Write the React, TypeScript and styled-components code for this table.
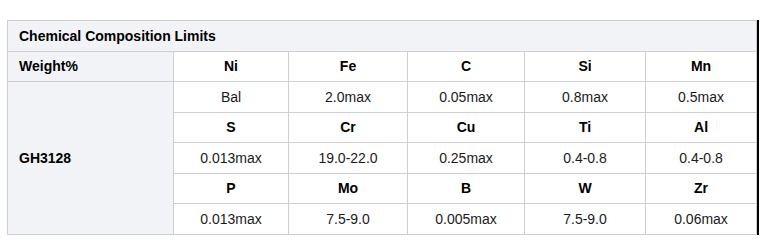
import React from "react";
import styled, { createGlobalStyle } from "styled-components";

const Global = createGlobalStyle`
  html, body { margin: 0; padding: 0; background: #fff; }
  body { font-family: "Liberation Sans", Arial, sans-serif; }
`;

const Page = styled.div`
  padding: 20px 0 0 7px;
`;

const Frame = styled.div`
  display: inline-block;
  border-right: 2px solid #000;
`;

const Table = styled.table`
  border-collapse: collapse;
  table-layout: fixed;
  width: 749px;
  font-size: 14px;
  color: #111;
`;

const Cell = styled.td<{ $head?: boolean; $side?: boolean }>`
  border: 1px solid #cfcfcf;
  padding: 0 11px;
  height: 29.5px;
  line-height: 16px;
  text-align: ${(p) => (p.$side ? "left" : "center")};
  font-weight: ${(p) => (p.$head || p.$side ? 700 : 400)};
  background: ${(p) => (p.$side ? "#f2f3f7" : "#fff")};
  color: ${(p) => (p.$head || p.$side ? "#000" : "#1a1a1a")};
  vertical-align: middle;
  white-space: nowrap;
`;

const widths = [166, 115, 119, 117, 121, 111];

const groups: { heads: string[]; vals: string[] }[] = [
  { heads: ["Ni", "Fe", "C", "Si", "Mn"], vals: ["Bal", "2.0max", "0.05max", "0.8max", "0.5max"] },
  { heads: ["S", "Cr", "Cu", "Ti", "Al"], vals: ["0.013max", "19.0-22.0", "0.25max", "0.4-0.8", "0.4-0.8"] },
  { heads: ["P", "Mo", "B", "W", "Zr"], vals: ["0.013max", "7.5-9.0", "0.005max", "7.5-9.0", "0.06max"] },
];

export default function App() {
  return (
    <>
      <Global />
      <Page>
        <Frame>
          <Table>
            <colgroup>
              {widths.map((w, i) => (
                <col key={i} style={{ width: w }} />
              ))}
            </colgroup>
            <tbody>
              <tr>
                <Cell $side colSpan={6}>Chemical Composition Limits</Cell>
              </tr>
              <tr>
                <Cell $side>Weight%</Cell>
                {groups[0].heads.map((h) => (
                  <Cell $head key={h}>{h}</Cell>
                ))}
              </tr>
              <tr>
                <Cell $side rowSpan={5}>GH3128</Cell>
                {groups[0].vals.map((v, i) => (
                  <Cell key={i}>{v}</Cell>
                ))}
              </tr>
              {groups.slice(1).map((g, gi) => (
                <React.Fragment key={gi}>
                  <tr>
                    {g.heads.map((h) => (
                      <Cell $head key={h}>{h}</Cell>
                    ))}
                  </tr>
                  <tr>
                    {g.vals.map((v, i) => (
                      <Cell key={i}>{v}</Cell>
                    ))}
                  </tr>
                </React.Fragment>
              ))}
            </tbody>
          </Table>
        </Frame>
      </Page>
    </>
  );
}
